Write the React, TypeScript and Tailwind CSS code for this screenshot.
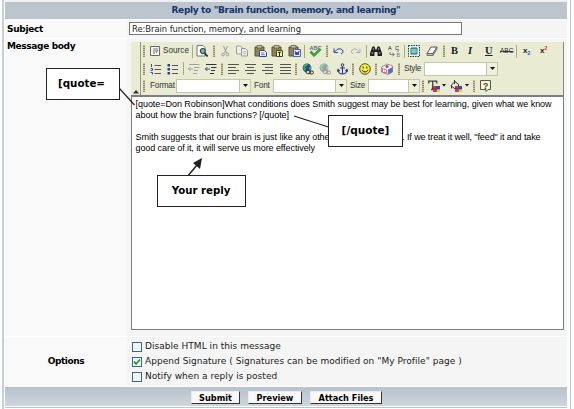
import type { ReactNode } from "react";

/* One toolbar cell; its width reaches up to the next cell. */
function Cell({ w, children }: { w: string; children?: ReactNode }) {
  return <div className={`flex h-full shrink-0 items-center ${w}`}>{children}</div>;
}

function Icon({ children, size = 12 }: { children: ReactNode; size?: number }) {
  return (
    <svg width={size} height="12" viewBox={`0 0 ${size} 12`} fill="none" className="shrink-0">
      {children}
    </svg>
  );
}

function Grip({ w }: { w: string }) {
  return (
    <Cell w={w}>
      <svg width="2" height="12" className="shrink-0">
        <path d="M1 0v12" stroke="#c9c3a8" strokeWidth="2" />
        <path d="M1 1v12" stroke="#94886c" strokeWidth="2" strokeDasharray="1 1" />
      </svg>
    </Cell>
  );
}

function Sep({ w }: { w: string }) {
  return (
    <Cell w={w}>
      <div className="h-[13px] w-px bg-[#a9ab78]" />
    </Cell>
  );
}

function Label({ w, children }: { w: string; children: string }) {
  return (
    <Cell w={w}>
      <span className="whitespace-nowrap pt-[2px] font-['Liberation_Sans',sans-serif] text-[8.2px] leading-none tracking-[-0.2px] text-[#333]">{children}</span>
    </Cell>
  );
}

function Select({ w }: { w: string }) {
  return (
    <div className={`flex h-[14px] shrink-0 border border-[#c4c6a8] bg-white ${w}`}>
      <div className="ml-auto flex w-[11px] items-center justify-center border-l border-[#c4c6a8] bg-[#eef0dc]">
        <svg width="5" height="3"><path d="M0 0h5L2.5 3z" fill="#111" /></svg>
      </div>
    </div>
  );
}

function Clipboard({ children }: { children: ReactNode }) {
  return (
    <Icon size={13}>
      <path d="M1 2h9v9H1z" fill="#8b8553" stroke="#57533a" />
      <path d="M3 .5h5v2.5H3z" fill="#c9c6ae" stroke="#5d5a40" strokeWidth=".8" />
      {children}
    </Icon>
  );
}

function Align({ d }: { d: string }) {
  return (
    <Icon>
      <path d={d} stroke="#55574f" strokeWidth="1" />
    </Icon>
  );
}

function Globe({ muted = false }: { muted?: boolean }) {
  return (
    <g opacity={muted ? 0.45 : 1}>
      <circle cx="5" cy="4.8" r="4.4" fill="#2344a0" />
      <path d="M2 2q2-2 4-1l-1 2-2 1 1 2-1 2-2-3zM7 4l2-1v3l-2 1z" fill="#3fae4c" />
      <rect x="4" y="7.6" width="4.5" height="3" rx="1.5" fill="#ddd" stroke="#333" />
      <rect x="7.5" y="8" width="4" height="3" rx="1.5" stroke="#333" />
    </g>
  );
}

function Swatches() {
  return (
    <g>
      <path d="M5 6h3.500v3H5z" fill="#d93030" />
      <path d="M8.5 6h3.500v3h-3.500z" fill="#3f3fc8" />
      <path d="M5 9h3.500v3H5z" fill="#b536a8" />
      <path d="M8.500 9h3.500v3h-3.500z" fill="#e8d337" />
      <path d="M5 9h7M8.500 6v6" stroke="#333" strokeWidth=".5" />
    </g>
  );
}

function Caret({ w }: { w: string }) {
  return (
    <Cell w={w}>
      <svg width="4" height="3"><path d="M0 0h4L2 2.500z" fill="#111" /></svg>
    </Cell>
  );
}

const glyph = "font-['Liberation_Serif',serif] text-[10.5px] leading-none text-[#222]";

function RowOne() {
  return (
    <div className="flex h-[18px] items-center">
      <Grip w="w-[7px]" />
      <Cell w="w-[13px]">
        <Icon size={11}>
          <path d="M.5 1.500h9v9H.5z" fill="#f6f6f4" stroke="#66696c" />
          <path d="M3 4h5M3 6h4M3 8h2M6 8l2-3" stroke="#555" strokeWidth=".8" />
        </Icon>
      </Cell>
      <Cell w="w-[29px]">
        <span className="whitespace-nowrap pt-px font-['Liberation_Sans',sans-serif] text-[8.2px] leading-none text-[#333]">Source</span>
      </Cell>
      <Sep w="w-[4px]" />
      <Cell w="w-[17px]">
        <Icon>
          <path d="M1 .5h6l2 2V11H1z" fill="#fff" stroke="#777" />
          <circle cx="6.800" cy="6" r="2.600" fill="#67b6b3" stroke="#333" />
          <path d="M8.600 8l3 3.500" stroke="#222" strokeWidth="1.600" />
        </Icon>
      </Cell>
      <Grip w="w-[8px]" />
      <Cell w="w-[15px]">
        <Icon size={9}>
          <path d="M2.500 1l3 7M6.500 1l-3 7" stroke="#999b94" />
          <circle cx="2" cy="9.500" r="1.400" stroke="#999bb0" />
          <circle cx="6.500" cy="9.500" r="1.400" stroke="#999bb0" />
        </Icon>
      </Cell>
      <Cell w="w-[18px]">
        <Icon>
          <path d="M.5 1h4l2 2v6h-6z" fill="#eeeee8" stroke="#a0a19b" />
          <path d="M5.500 3.500h4l2 2V11h-6z" fill="#eeeee8" stroke="#9697a5" />
          <path d="M7 6.500h3M7 8.500h3" stroke="#a7a8b4" strokeWidth=".8" />
        </Icon>
      </Cell>
      <Cell w="w-[17px]">
        <Clipboard>
          <path d="M5.500 5.500h5l2 2V11.500h-7z" fill="#f1f2ff" stroke="#334a9a" />
          <path d="M7 8h3M7 9.700h4" stroke="#334a9a" strokeWidth=".7" />
        </Clipboard>
      </Cell>
      <Cell w="w-[17px]">
        <Clipboard>
          <path d="M5.500 5.500h6v6h-6z" fill="#f7f1a0" stroke="#4b482e" />
          <path d="M7 7.300h3M8.500 7v4" stroke="#222" />
        </Clipboard>
      </Cell>
      <Cell w="w-[16px]">
        <Clipboard>
          <path d="M5.500 4.500h7v7h-7z" fill="#e5e9ff" stroke="#5061a8" />
          <path d="M7 6l1 4 1-3 1 3 1-4" stroke="#26399a" />
        </Clipboard>
      </Cell>
      <Sep w="w-[5px]" />
      <Cell w="w-[17px]">
        <svg width="13" height="12" viewBox="0 0 13 12" className="shrink-0">
          <text x="0.500" y="4.500" fontSize="5.500" fontWeight="700" fontFamily="Liberation Sans" fill="#59618b">ABC</text>
          <path d="M1.500 6.500L5 10.300 11.500 4" stroke="#38a238" strokeWidth="2.600" fill="none" />
        </svg>
      </Cell>
      <Grip w="w-[7px]" />
      <Cell w="w-[18px]">
        <Icon size={11}>
          <path d="M1 3.500v4h4M1.500 7L4 4.500Q7.500 2.500 9.500 5t-1.500 4" stroke="#3843a0" />
        </Icon>
      </Cell>
      <Cell w="w-[15px]">
        <Icon size={10}>
          <path d="M9 3.500v4H5M8.500 7L6 4.500Q3 3 1 5t1 4" stroke="#a9a9bb" />
        </Icon>
      </Cell>
      <Sep w="w-[4px]" />
      <Cell w="w-[18px]">
        <Icon>
          <path d="M2.500 1.500h2l1 3h1l1-3h2L12 8v3H7.500V7h-3v4H0V8z" fill="#222" />
          <path d="M1.500 8h1.500M9 8h1.500M3 4h1M8 4h1" stroke="#c9c9c9" />
        </Icon>
      </Cell>
      <Cell w="w-[16px]">
        <svg width="13" height="12" viewBox="0 0 13 12" className="shrink-0 font-['Liberation_Sans']">
          <text x="0" y="5" fontSize="5.500" fill="#222">A</text>
          <text x="7" y="4.500" fontSize="5.500" fill="#222">C</text>
          <text x="8.500" y="11.500" fontSize="5.500" fill="#777">B</text>
          <path d="M2 7v2.500h4M4.500 8l2 1.500-2 1.500M10 5v2" stroke="#555" strokeWidth=".7" fill="none" />
        </svg>
      </Cell>
      <Sep w="w-[4px]" />
      <Cell w="w-[18px]">
        <Icon>
          <path d="M.5 .5h11v11H.5z" fill="#dff4f4" stroke="#333" strokeDasharray="1.500 1" />
          <path d="M3 3h6v6H3z" fill="#57aeb3" stroke="#2c6d75" />
          <path d="M3 5h6M3 7h6" stroke="#c9eff0" strokeWidth=".7" />
        </Icon>
      </Cell>
      <Cell w="w-[17px]">
        <Icon>
          <path d="M5 2h6L7 8.500H1z" fill="#f7f7f4" stroke="#555" />
          <path d="M1 8.500h6v2H1zM7 8.500L11 2v2L7 10.500" fill="#bbb" stroke="#555" strokeWidth=".7" />
        </Icon>
      </Cell>
      <Grip w="w-[8px]" />
      <Cell w="w-[17px]"><b className={glyph}>B</b></Cell>
      <Cell w="w-[17px]"><b className={`italic ${glyph}`}>I</b></Cell>
      <Cell w="w-[15px]"><b className={`underline ${glyph}`}>U</b></Cell>
      <Cell w="w-[16px]"><span className="font-['Liberation_Sans',sans-serif] text-[6.5px] leading-none text-[#333] line-through">ABC</span></Cell>
      <Sep w="w-[7px]" />
      <Cell w="w-[17px]">
        <span className="flex font-['Liberation_Sans',sans-serif] text-[8px] font-bold leading-none text-[#222]">x<span className="mt-[4px] text-[5px] text-[#3544b0]">2</span></span>
      </Cell>
      <Cell w="w-[10px]">
        <span className="flex font-['Liberation_Sans',sans-serif] text-[8px] font-bold leading-none text-[#222]">x<span className="-mt-px text-[5px] text-[#c03030]">2</span></span>
      </Cell>
    </div>
  );
}

function RowTwo() {
  return (
    <div className="flex h-[17px] items-center">
      <Grip w="w-[7px]" />
      <Cell w="w-[17px]">
        <Icon>
          <path d="M4.500 2.500H11M4.500 6.500H11M4.500 10.500H11" stroke="#555" />
          <path d="M1.500 1v3M.5 5.500h2v2h-2M.5 9.500h2v2" stroke="#3d47aa" />
        </Icon>
      </Cell>
      <Cell w="w-[16px]">
        <Icon>
          <path d="M5 2.500h6M5 6.500h6M5 10.500h6" stroke="#555" />
          <path d="M.5 1h2.500v2.500H.5zM.5 5h2.500v2.500H.5zM.5 9h2.500v2.500H.5z" fill="#2e389d" />
        </Icon>
      </Cell>
      <Sep w="w-[5px]" />
      <Cell w="w-[17px]">
        <Icon>
          <path d="M1 1.500h10.500M6 4.500h5.500M6 7.500h4M5 10.500h4M0 6h5M2.500 4l-2 2 2 2" stroke="#a4a59c" />
        </Icon>
      </Cell>
      <Cell w="w-[16px]">
        <Icon>
          <path d="M1 1.500h10.500M6 4.500h5.500M6 7.500h4M5 10.500h4" stroke="#333" strokeWidth="1.200" />
          <path d="M0 6h5M2.500 4l-2 2 2 2" stroke="#444d9c" />
        </Icon>
      </Cell>
      <Grip w="w-[7px]" />
      <Cell w="w-[17px]"><Align d="M0 1.500h11M0 4.500h8M0 7.500h11M0 10.500h8" /></Cell>
      <Cell w="w-[17px]"><Align d="M0 1.500h11M2 4.500h7M0 7.500h11M2 10.500h7" /></Cell>
      <Cell w="w-[18px]"><Align d="M0 1.500h11M3 4.500h8M0 7.500h11M3 10.500h8" /></Cell>
      <Cell w="w-[15px]"><Align d="M0 1.500h11M0 4.500h11M0 7.500h11M0 10.500h11" /></Cell>
      <Grip w="w-[7px]" />
      <Cell w="w-[17px]"><Icon><Globe /></Icon></Cell>
      <Cell w="w-[18px]"><Icon><Globe muted /></Icon></Cell>
      <Cell w="w-[15px]">
        <Icon size={11}>
          <circle cx="5.500" cy="2" r="1.300" stroke="#293783" />
          <path d="M5.500 3.500V11M3 5h5M1 7q.5 4 4.500 4T10 7M.3 8.500L1 6.500l1.800 1.500M8.300 8L10 6.500l.7 2" stroke="#293783" strokeWidth="1.100" />
        </Icon>
      </Cell>
      <Grip w="w-[7px]" />
      <Cell w="w-[16px]">
        <Icon>
          <circle cx="6" cy="6" r="5.300" fill="#f4ef45" stroke="#55521e" />
          <path d="M4.200 3.500v2M7.800 3.500v2M2.800 7q3.200 4 6.400 0" stroke="#222" />
        </Icon>
      </Cell>
      <Grip w="w-[6px]" />
      <Cell w="w-[17px]">
        <Icon>
          <path d="M.5 4L6 1l5.500 2v6L7 11.500.5 9z" fill="#f5f5f8" stroke="#8c8ca4" />
          <path d="M1 5l5 1.500V11L1 9z" fill="#d8698c" />
          <path d="M7 6.500l4.500-2.500V9L7 11.300z" fill="#5b6fc0" />
          <circle cx="6" cy="3.500" r="1.500" fill="#b8463c" />
          <path d="M2.500 9V6.500L4.500 9V7" stroke="#fff" />
        </Icon>
      </Cell>
      <Grip w="w-[6px]" />
      <Label w="w-[20px]">Style</Label>
      <Select w="w-[74px]" />
    </div>
  );
}

function RowThree() {
  return (
    <div className="flex h-[17px] items-center">
      <Grip w="w-[7px]" />
      <Label w="w-[26px]">Format</Label>
      <Select w="w-[75px]" />
      <div className="w-[3px]" />
      <Label w="w-[19px]">Font</Label>
      <Select w="w-[74px]" />
      <div className="w-[3px]" />
      <Label w="w-[18px]">Size</Label>
      <Select w="w-[52px]" />
      <div className="w-[2px]" />
      <Grip w="w-[6px]" />
      <Cell w="w-[14px]">
        <Icon>
          <path d="M.7 3.500V1.200h8v2.300M4.700 1.200v8.300M3 9.500h2" stroke="#444" strokeWidth="1.300" />
          <Swatches />
        </Icon>
      </Cell>
      <Caret w="w-[8px]" />
      <Cell w="w-[15px]">
        <Icon>
          <path d="M1 5.500L5 1.500l4 3.500-4 4z" fill="#e8e8df" stroke="#333" />
          <path d="M1.500 5.500v3M4.500 0v4" stroke="#333" />
          <Swatches />
        </Icon>
      </Cell>
      <Caret w="w-[8px]" />
      <Grip w="w-[7px]" />
      <Cell w="w-[12px]">
        <svg width="12" height="12" viewBox="0 0 12 12">
          <path d="M.5 .5h10v9H8L6 11.500V9.500H.5z" fill="#fbf7bd" stroke="#555" />
          <text x="2.800" y="8.500" fontSize="9" fontWeight="700" fontFamily="Liberation Sans" fill="#2c3b9b">?</text>
        </svg>
      </Cell>
    </div>
  );
}

function Option({ checked = false, children }: { checked?: boolean; children: string }) {
  return (
    <label className="flex h-[15px] items-center gap-[3px]">
      <span className="flex h-[10px] w-[10px] shrink-0 items-center justify-center border border-[#35678f] bg-[#f3f3ef]">
        {checked && <svg width="8" height="8" viewBox="0 0 8 8"><path d="M1 3.500l2 2.500L7 1.500" fill="none" stroke="#159a15" strokeWidth="1.600" /></svg>}
      </span>
      <span className="whitespace-nowrap text-[9px] leading-none tracking-[0.035px]">{children}</span>
    </label>
  );
}

function Button({ w, children }: { w: string; children: string }) {
  return (
    <button className={`flex h-[13px] items-center justify-center whitespace-nowrap border border-[#e9edf0] border-r-[#333] border-b-[#333] bg-[#f8f8f8] pt-px text-[8.2px] font-bold leading-none text-black ${w}`}>
      {children}
    </button>
  );
}

const callout = "absolute flex items-center justify-center whitespace-nowrap border border-[#222] bg-white font-bold text-black";

export default function App() {
  return (
    <div className="relative h-[409px] w-[574px] overflow-hidden bg-white font-['DejaVu_Sans',sans-serif] text-[#222]">
      <div className="ml-[2px] flex h-full w-[569px] flex-col border-l-2 border-r border-l-[#c6d0da] border-r-[#b9c6d5] pl-px pr-[3px]">
        <div className="h-[2px] bg-[#eef0f3]" />
        <header className="flex h-[17px] shrink-0 items-center justify-center bg-[#bcc4ce]">
          <h1 className="whitespace-nowrap text-[9px] font-bold leading-none tracking-[-0.33px] text-[#12346a]">Reply to "Brain function, memory, and learning"</h1>
        </header>
        <div className="mt-px flex h-[18px] shrink-0 bg-[#f5f5f5]">
          <div className="w-[122px] bg-[#f9f9f9] pl-[2px] pt-[4px] text-[9px] font-bold leading-[10px] tracking-[-0.3px] text-black">Subject</div>
          <div className="pl-[2px] pt-[2px]">
            <div className="flex h-[13px] w-[333px] items-center border border-[#777] bg-white pl-[2px] pt-px">
              <span className="whitespace-nowrap text-[8.4px] leading-none tracking-[-0.04px]">Re:Brain function, memory, and learning</span>
            </div>
          </div>
        </div>
        <div className="mt-px flex h-[297px] shrink-0 bg-[#f5f5f5]">
          <div className="w-[122px] bg-[#f9f9f9] pl-[2px] pt-[2px] text-[9px] font-bold leading-[10px] tracking-[-0.36px] text-black">Message body</div>
          <div className="flex w-[437px] flex-col pl-[4px] pt-[3px]">
            <div className="flex h-[53px] shrink-0 border-r border-[#858777] bg-[#e9ebd3]">
              <div className="flex w-[10px] shrink-0 items-end justify-center border-r border-[#979987] pb-[1px]">
                <svg width="6" height="4"><path d="M0 3.500L3 0l3 3.500z" fill="#3a2a20" /></svg>
              </div>
              <div className="flex flex-col pl-[2px]">
                <RowOne />
                <RowTwo />
                <RowThree />
              </div>
            </div>
            <div className="h-[235px] w-[433px] shrink-0 border border-t-2 border-[#7d7d7d] bg-white pl-[3.5px] pt-[2px] font-['Liberation_Sans',sans-serif] text-[9px] leading-[11px] tracking-[-0.04px] text-black">
              <p className="whitespace-nowrap">[quote=Don Robinson]What conditions does Smith suggest may be best for learning, given what we know</p>
              <p className="whitespace-nowrap">about how the brain functions? [/quote]</p>
              <p className="mt-[11px] flex w-[405px] justify-between whitespace-nowrap">
                <span className="tracking-[-0.03px]">Smith suggests that our brain is just like any othe</span>
                <span className="tracking-[-0.1px]">. If we treat it well, "feed" it and take</span>
              </p>
              <p className="whitespace-nowrap tracking-[-0.08px]">good care of it, it will serve us more effectively</p>
            </div>
          </div>
        </div>
        <div className="mt-px flex h-[49px] shrink-0 bg-[#f5f5f5]">
          <div className="flex w-[122px] items-center justify-center bg-[#f9f9f9] text-[9px] font-bold leading-none tracking-[-0.4px] text-black">Options</div>
          <div className="flex flex-col pl-[5px] pt-[2px]">
            <Option>Disable HTML in this message</Option>
            <Option checked>{'Append Signature ( Signatures can be modified on "My Profile" page )'}</Option>
            <Option>Notify when a reply is posted</Option>
          </div>
        </div>
        <div className="mt-px flex h-[19px] shrink-0 items-center gap-[8px] bg-gradient-to-b from-[#b8c2cb] to-[#ced6dd] pl-[186px] pt-[2px]">
          <Button w="w-[49px]">Submit</Button>
          <Button w="w-[54px]">Preview</Button>
          <Button w="w-[72px]">Attach Files</Button>
        </div>
        <div className="mt-px h-px bg-[#b7c3ce]" />
      </div>

      {/* Annotation leaders and boxes over the form */}
      <svg width="574" height="409" className="pointer-events-none absolute left-0 top-0" fill="none" stroke="#222">
        <path d="M119 88l15.500 17" strokeWidth="1.200" />
        <path d="M294 116l36 11.500" strokeWidth="1.200" />
        <path d="M187 177l10-12" strokeWidth="1.500" />
        <path d="M202 158l-9 5 7 6z" fill="#222" stroke="none" />
      </svg>
      <div className={`${callout} left-[46px] top-[68px] h-[32px] w-[74px] pr-[3px] text-[10.3px]`}>[quote=</div>
      <div className={`${callout} left-[328px] top-[115px] h-[32px] w-[75px] text-[10.5px]`}>[/quote]</div>
      <div className={`${callout} left-[157px] top-[175px] h-[32px] w-[89px] pr-px text-[10.2px]`}>Your reply</div>
    </div>
  );
}
